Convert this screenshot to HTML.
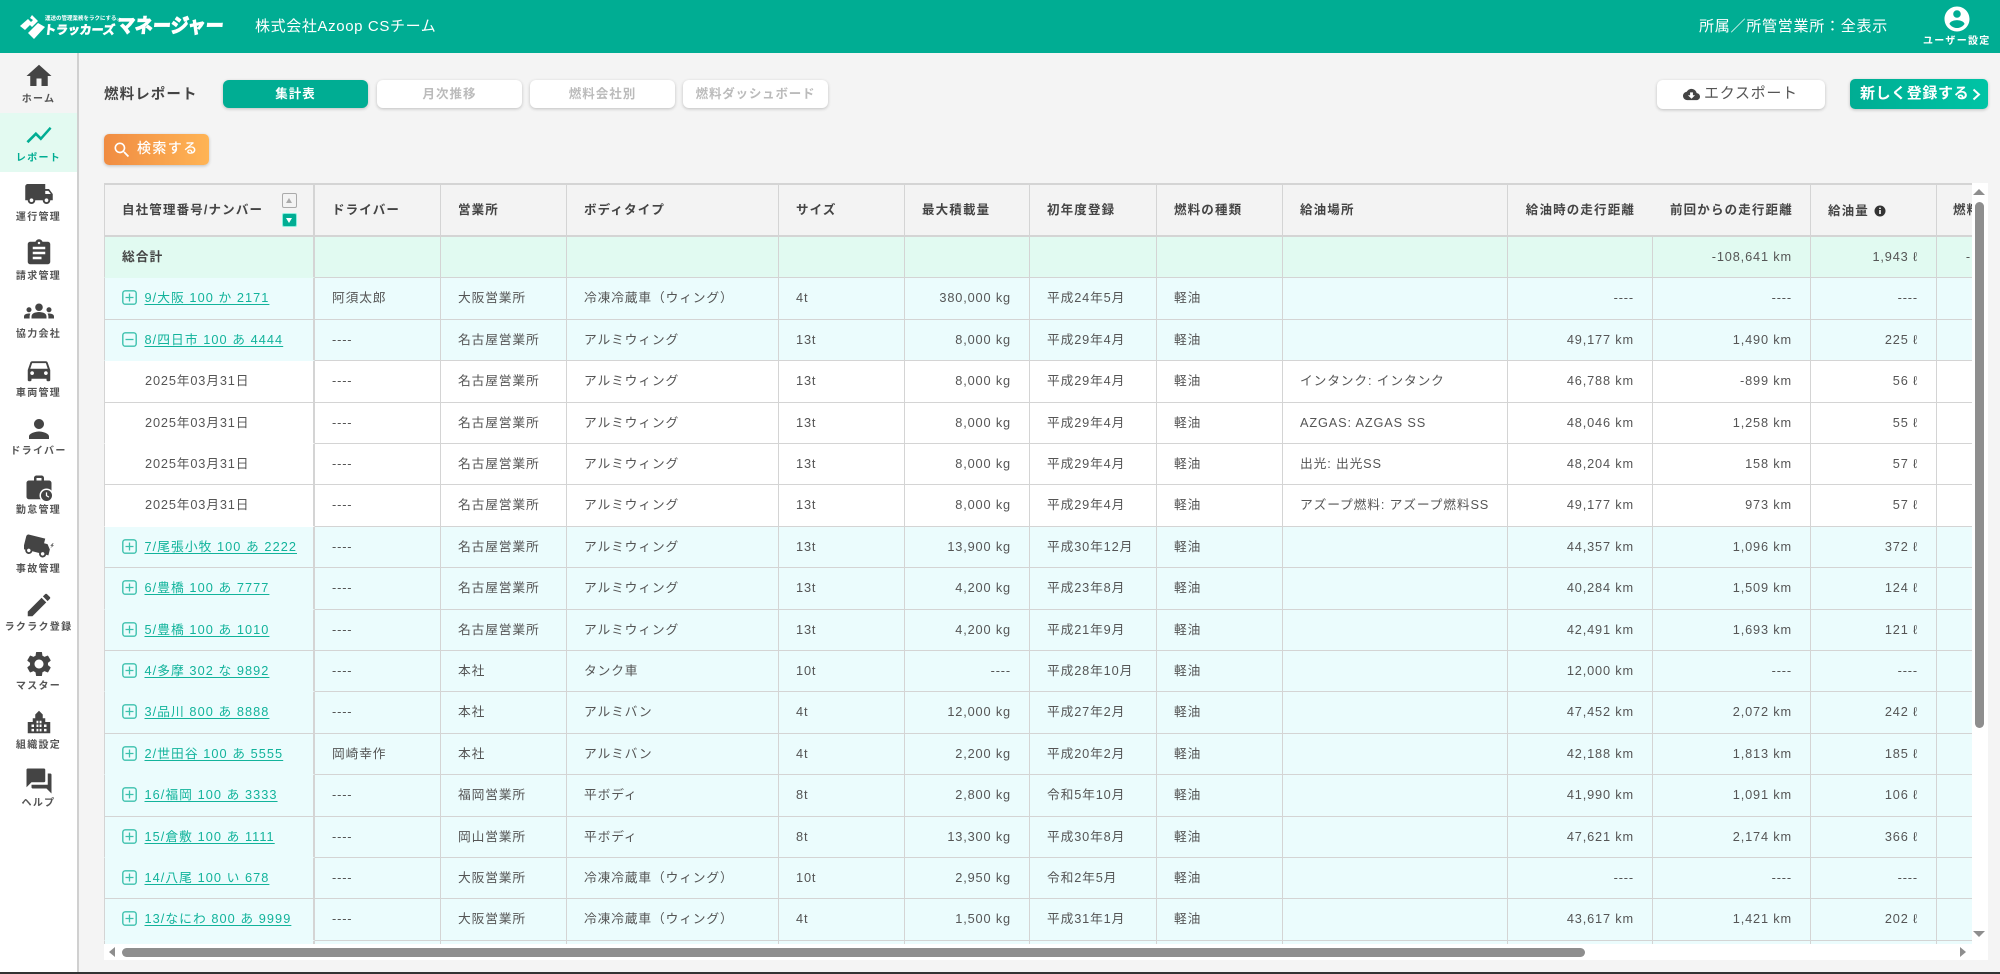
<!DOCTYPE html>
<html lang="ja"><head><meta charset="utf-8"><title>燃料レポート</title>
<style>
*{box-sizing:border-box;margin:0;padding:0}
html,body{width:2000px;height:974px;overflow:hidden;background:#f4f4f4}
body{font-family:"Liberation Sans","Noto Sans CJK JP",sans-serif;color:#555;position:relative;filter:blur(.3px)}
.abs{position:absolute}
#top{position:absolute;left:0;top:0;width:2000px;height:53px;background:#00ad93;color:#fff}
#side{position:absolute;left:0;top:53px;width:79px;height:919px;background:#fff;border-right:2px solid #d0d0d0}
.it{position:absolute;left:0;width:77px;height:59px;text-align:center}
.it svg{position:absolute;left:24px;width:30px;height:30px;fill:#444}
.it em{position:absolute;left:-5px;width:87px;top:38px;font-style:normal;font-weight:700;font-size:10px;line-height:14px;letter-spacing:1.3px;color:#555;white-space:nowrap}
.tab{position:absolute;top:80px;width:145px;height:28px;border-radius:6px;background:#fff;box-shadow:0 1px 3px rgba(0,0,0,.22);text-align:center;font-size:12.5px;font-weight:700;line-height:29px;color:#bbb;letter-spacing:1px}
#tbl{position:absolute;left:104px;top:183px;width:1868px;height:761px;overflow:hidden;background:#fff}
#rows{position:absolute;left:0;top:1px;width:2000px;height:800px}
.r{position:absolute;left:0;width:2000px;height:41.4px;display:grid;grid-template-columns:211px 126px 126px 212px 126px 125px 127px 126px 225px 145px 158px 126px 100px;font-size:12.75px;letter-spacing:.85px;background:#fff}
.r>span{display:block;line-height:40px;padding:0 18px 0 17px;border-right:1.5px solid #d4d4d4;border-bottom:1.5px solid #d4d4d4;white-space:nowrap;overflow:hidden}
.r>span:nth-child(1){padding-left:16.5px;border-left:1.5px solid #d4d4d4;border-right:2px solid #d4d4d4}
.r>span:nth-child(6),.r>span:nth-child(10),.r>span:nth-child(11),.r>span:nth-child(12){text-align:right}
.r.c>span{background:#ebfcfd}
.r.nb>span:nth-child(1){border-bottom-color:transparent}
.r.d>span:nth-child(1){padding-left:40px}
.r>span a{color:#12b39b;text-decoration:underline;text-underline-offset:2px;letter-spacing:1.05px}
.r>span svg{width:15px;height:15px;vertical-align:-3px;margin-right:8px}
#hd{position:absolute;left:0;top:0;width:2000px;height:54px;display:grid;grid-template-columns:211px 126px 126px 212px 126px 125px 127px 126px 225px 145px 158px 126px 100px;background:#f3f3f3;font-size:12.5px;font-weight:700;letter-spacing:1.15px;color:#444;border-top:2px solid #d4d4d4}
#hd>span{line-height:50px;padding:0 18px 0 17px;border-right:1.5px solid #d4d4d4;border-bottom:2px solid #d4d4d4;white-space:nowrap;overflow:hidden}
#hd>span:nth-child(1){padding-left:17px;border-left:1.5px solid #d4d4d4;border-right:2px solid #d4d4d4}
#hd>span:nth-child(10){text-align:right;border-right:none}
#hd>span:nth-child(11){text-align:right}
.r.t>span{background:#e1faf1;line-height:39px}
</style></head><body>

<div id="top">
<svg class="abs" style="left:19px;top:14px" width="27" height="26" viewBox="0 0 27 26" fill="#fff"><polygon points="13,1 19,7 13,13 10,10 14,6 11,4"/><polygon points="9,5 13,9 6,16 1,12"/><polygon points="19,9 26,13 15,25 9,19"/></svg>
<div class="abs" style="left:45px;top:15px;font-size:5.5px;font-weight:700;line-height:8px;white-space:nowrap">運送の管理業務をラクにする。</div>
<div class="abs" style="left:44px;top:21px;font-size:12px;font-weight:700;line-height:18px;white-space:nowrap;-webkit-text-stroke:.7px #fff;letter-spacing:-.1px;transform:skewX(-6deg)">トラッカーズ</div>
<div class="abs" style="left:117px;top:14px;font-size:18px;font-weight:700;line-height:24px;white-space:nowrap;-webkit-text-stroke:1px #fff;transform:skewX(-6deg) scaleY(1.1)">マネージャー</div>
<div class="abs" style="left:255px;top:17px;font-size:15px;line-height:20px;letter-spacing:.62px;white-space:nowrap">株式会社Azoop CSチーム</div>
<div class="abs" style="left:1699px;top:17px;font-size:15px;line-height:20px;letter-spacing:.75px;white-space:nowrap">所属／所管営業所：全表示</div>
<svg class="abs" style="left:1942px;top:4px" width="30" height="30" viewBox="0 0 24 24" fill="#fff"><path d="M12 2C6.48 2 2 6.48 2 12s4.48 10 10 10 10-4.48 10-10S17.52 2 12 2zm0 3c1.66 0 3 1.34 3 3s-1.34 3-3 3-3-1.34-3-3 1.34-3 3-3zm0 14.2c-2.5 0-4.71-1.28-6-3.22.03-1.99 4-3.08 6-3.08 1.99 0 5.97 1.09 6 3.08-1.29 1.94-3.5 3.22-6 3.22z"/></svg>
<div class="abs" style="left:1923px;top:35px;font-size:10px;font-weight:700;line-height:14px;letter-spacing:1.3px;white-space:nowrap">ユーザー設定</div>
</div>

<div id="side">
<div class="it" style="top:0;height:60px;background:#f4f4f4"><svg style="top:8px" viewBox="0 0 24 24"><path d="M10 20v-6h4v6h5v-8h3L12 3 2 12h3v8z"/></svg><em style="top:40px">ホーム</em></div>
<div class="it" style="top:60px;background:#e3faf1"><svg style="top:7px;fill:#00ad93" viewBox="0 0 24 24"><path d="M3.5 18.49l6-6.01 4 4L22 6.92l-1.41-1.41-7.09 7.97-4-4L2 16.99z"/></svg><em style="color:#00ad93;top:39px">レポート</em></div>
<div class="it" style="top:118px"><svg style="top:8px" viewBox="0 0 24 24"><path d="M20 8h-3V4H3c-1.1 0-2 .9-2 2v11h2c0 1.66 1.34 3 3 3s3-1.34 3-3h6c0 1.66 1.34 3 3 3s3-1.34 3-3h2v-5l-3-4zM6 18.5c-.83 0-1.5-.67-1.5-1.5s.67-1.5 1.5-1.5 1.5.67 1.5 1.5-.67 1.5-1.5 1.5zm13.5-9l1.96 2.5H17V9.5h2.5zm-1.5 9c-.83 0-1.5-.67-1.5-1.5s.67-1.5 1.5-1.5 1.5.67 1.5 1.5-.67 1.5-1.5 1.5z"/></svg><em style="top:40px">運行管理</em></div>
<div class="it" style="top:176px"><svg style="top:9px" viewBox="0 0 24 24"><path d="M19 3h-4.18C14.4 1.84 13.3 1 12 1c-1.3 0-2.4.84-2.82 2H5c-1.1 0-2 .9-2 2v14c0 1.1.9 2 2 2h14c1.1 0 2-.9 2-2V5c0-1.1-.9-2-2-2zm-7 0c.55 0 1 .45 1 1s-.45 1-1 1-1-.45-1-1 .45-1 1-1zm2 14H7v-2h7v2zm3-4H7v-2h10v2zm0-4H7V7h10v2z"/></svg><em style="top:41px">請求管理</em></div>
<div class="it" style="top:235px"><svg style="top:8px" viewBox="0 0 24 24"><path d="M12 12.75c1.63 0 3.07.39 4.24.9 1.08.48 1.76 1.56 1.76 2.73V18H6v-1.61c0-1.18.68-2.26 1.76-2.73 1.17-.52 2.61-.91 4.24-.91zM4 13c1.1 0 2-.9 2-2s-.9-2-2-2-2 .9-2 2 .9 2 2 2zm1.13 1.1C4.76 14.04 4.39 14 4 14c-.99 0-1.93.21-2.78.58C.48 14.9 0 15.62 0 16.43V18h4.5v-1.61c0-.83.23-1.61.63-2.29zM20 13c1.1 0 2-.9 2-2s-.9-2-2-2-2 .9-2 2 .9 2 2 2zm4 3.43c0-.81-.48-1.53-1.22-1.85C21.93 14.21 20.99 14 20 14c-.39 0-.76.04-1.13.1.4.68.63 1.46.63 2.29V18H24v-1.57zM12 6c1.66 0 3 1.34 3 3s-1.34 3-3 3-3-1.34-3-3 1.34-3 3-3z"/></svg><em style="top:40px">協力会社</em></div>
<div class="it" style="top:294px"><svg style="top:8px" viewBox="0 0 24 24"><path d="M18.92 6.01C18.72 5.42 18.16 5 17.5 5h-11c-.66 0-1.21.42-1.42 1.01L3 12v8c0 .55.45 1 1 1h1c.55 0 1-.45 1-1v-1h12v1c0 .55.45 1 1 1h1c.55 0 1-.45 1-1v-8l-2.08-5.99zM6.5 16c-.83 0-1.5-.67-1.5-1.5S5.67 13 6.5 13s1.5.67 1.5 1.5S7.33 16 6.5 16zm11 0c-.83 0-1.5-.67-1.5-1.5s.67-1.5 1.5-1.5 1.5.67 1.5 1.5-.67 1.5-1.5 1.5zM5 11l1.5-4.5h11L19 11H5z"/></svg><em style="top:40px">車両管理</em></div>
<div class="it" style="top:352px"><svg style="top:9px" viewBox="0 0 24 24"><path d="M12 12c2.21 0 4-1.79 4-4s-1.79-4-4-4-4 1.79-4 4 1.79 4 4 4zm0 2c-2.67 0-8 1.34-8 4v2h16v-2c0-2.66-5.33-4-8-4z"/></svg><em style="top:40px">ドライバー</em></div>
<div class="it" style="top:411px"><svg style="top:9px" viewBox="0 0 24 24"><path d="M20 6h-4V4c0-1.1-.9-2-2-2h-4c-1.1 0-2 .9-2 2v2H4c-1.1 0-2 .9-2 2v11c0 1.1.9 2 2 2h16c1.1 0 2-.9 2-2V8c0-1.1-.9-2-2-2zm-6 0h-4V4h4v2z"/><circle cx="18" cy="18" r="5.6" fill="#fff"/><circle cx="18" cy="18" r="4.4"/><path d="M17.5 15.5h1v2.4l1.7 1-.5.8-2.2-1.3z" fill="#fff"/></svg><em style="top:40px">勤怠管理</em></div>
<div class="it" style="top:470px"><svg style="top:9px" viewBox="0 0 24 24"><g transform="rotate(14 10 12) translate(-1 0) scale(.95)"><path d="M20 8h-3V4H3c-1.1 0-2 .9-2 2v11h2c0 1.66 1.34 3 3 3s3-1.34 3-3h6c0 1.66 1.34 3 3 3s3-1.34 3-3h2v-5l-3-4zM6 18.5c-.83 0-1.5-.67-1.5-1.5s.67-1.5 1.5-1.5 1.5.67 1.5 1.5-.67 1.5-1.5 1.5zm12 0c-.83 0-1.5-.67-1.5-1.5s.67-1.5 1.5-1.5 1.5.67 1.5 1.5-.67 1.5-1.5 1.5z"/></g><path d="M23 9l-2 2h1.6l-1.6 2 3-2.4h-1.5l1.2-1.6z"/></svg><em style="top:40px">事故管理</em></div>
<div class="it" style="top:528px"><svg style="top:9px" viewBox="0 0 24 24"><path d="M3 17.25V21h3.75L17.81 9.94l-3.75-3.75L3 17.25zM20.71 7.04c.39-.39.39-1.02 0-1.41l-2.34-2.34c-.39-.39-1.02-.39-1.41 0l-1.83 1.83 3.75 3.75 1.83-1.83z"/></svg><em style="top:40px">ラクラク登録</em></div>
<div class="it" style="top:587px"><svg style="top:9px" viewBox="0 0 24 24"><path d="M19.14 12.94c.04-.3.06-.61.06-.94 0-.32-.02-.64-.07-.94l2.03-1.58c.18-.14.23-.41.12-.61l-1.92-3.32c-.12-.22-.37-.29-.59-.22l-2.39.96c-.5-.38-1.03-.7-1.62-.94l-.36-2.54c-.04-.24-.24-.41-.48-.41h-3.84c-.24 0-.43.17-.47.41l-.36 2.54c-.59.24-1.13.57-1.62.94l-2.39-.96c-.22-.08-.47 0-.59.22L2.74 8.87c-.12.21-.08.47.12.61l2.03 1.58c-.05.3-.09.63-.09.94s.02.64.07.94l-2.03 1.58c-.18.14-.23.41-.12.61l1.92 3.32c.12.22.37.29.59.22l2.39-.96c.5.38 1.03.7 1.62.94l.36 2.54c.05.24.24.41.48.41h3.84c.24 0 .44-.17.47-.41l.36-2.54c.59-.24 1.13-.56 1.62-.94l2.39.96c.22.08.47 0 .59-.22l1.92-3.32c.12-.22.07-.47-.12-.61l-2.01-1.58zM12 15.6c-1.98 0-3.6-1.62-3.6-3.6s1.62-3.6 3.6-3.6 3.6 1.62 3.6 3.6-1.62 3.6-3.6 3.6z"/></svg><em style="top:40px">マスター</em></div>
<div class="it" style="top:646px"><svg style="top:8px" viewBox="0 0 24 24"><path fill-rule="evenodd" d="M12 3l3 3v3h2v3h4v9H3v-9h4V9h2V6zM6 14v2h2v-2zM10 11v2h1.5v-2zM12.5 11v2H14v-2zM10 14v2h1.5v-2zM12.5 14v2H14v-2zM16 14v2h2v-2zM6 17.5v2h2v-2zM10 17.5v2h1.5v-2zM12.5 17.5v2H14v-2zM16 17.5v2h2v-2z"/></svg><em style="top:40px">組織設定</em></div>
<div class="it" style="top:704px"><svg style="top:9px" viewBox="0 0 24 24"><path d="M21 6h-2v9H6v2c0 .55.45 1 1 1h11l4 4V7c0-.55-.45-1-1-1zm-4 6V3c0-.55-.45-1-1-1H3c-.55 0-1 .45-1 1v14l4-4h10c.55 0 1-.45 1-1z"/></svg><em style="top:40px">ヘルプ</em></div>
</div>

<div class="abs" style="left:104px;top:85px;font-size:14.5px;font-weight:700;line-height:20px;letter-spacing:1.1px;color:#444;white-space:nowrap">燃料レポート</div>
<div class="tab" style="left:223px;background:#00ad93;color:#fff">集計表</div>
<div class="tab" style="left:377px">月次推移</div>
<div class="tab" style="left:530px">燃料会社別</div>
<div class="tab" style="left:683px;letter-spacing:.8px">燃料ダッシュボード</div>

<div class="abs" style="left:1657px;top:80px;width:168px;height:29px;border-radius:6px;background:#fff;box-shadow:0 1px 3px rgba(0,0,0,.22);font-size:15px;line-height:27px;letter-spacing:.7px;color:#555;padding-left:47px;white-space:nowrap">エクスポート
<svg class="abs" style="left:26px;top:6px" width="17" height="17" viewBox="0 0 24 24" fill="#444"><path d="M19.35 10.04C18.67 6.59 15.64 4 12 4 9.11 4 6.6 5.64 5.35 8.04 2.34 8.36 0 10.91 0 14c0 3.31 2.69 6 6 6h13c2.76 0 5-2.24 5-5 0-2.64-2.05-4.78-4.65-4.96zM17 13l-5 5-5-5h3V9h4v4h3z"/></svg></div>
<div class="abs" style="left:1850px;top:79px;width:138px;height:30px;border-radius:5px;background:linear-gradient(90deg,#00ad93,#00c4a5);box-shadow:0 1px 3px rgba(0,0,0,.22);font-size:15px;font-weight:700;line-height:29px;letter-spacing:.6px;color:#fff;padding-left:10px;white-space:nowrap">新しく登録する
<svg class="abs" style="left:122px;top:9px" width="9" height="13" viewBox="0 0 9 13" fill="none" stroke="#fff" stroke-width="2"><path d="M1.5 1.5l5.5 5-5.5 5"/></svg></div>
<div class="abs" style="left:104px;top:134px;width:105px;height:31px;border-radius:5px;background:linear-gradient(90deg,#f08c42,#ffb455);box-shadow:0 1px 3px rgba(0,0,0,.22);font-size:14px;line-height:29px;letter-spacing:1.4px;color:#fff;padding-left:33px;white-space:nowrap;font-weight:500">検索する
<svg class="abs" style="left:8px;top:6px" width="20" height="20" viewBox="0 0 24 24" fill="#fff"><path d="M15.5 14h-.79l-.28-.27C15.41 12.59 16 11.11 16 9.5 16 5.91 13.09 3 9.5 3S3 5.91 3 9.5 5.91 16 9.5 16c1.61 0 3.09-.59 4.23-1.57l.27.28v.79l5 4.99L20.49 19l-4.99-5zm-6 0C7.01 14 5 11.99 5 9.5S7.01 5 9.5 5 14 7.01 14 9.5 11.99 14 9.5 14z"/></svg></div>

<svg width="0" height="0" style="position:absolute"><defs>
<symbol id="p" viewBox="0 0 15 15"><rect x=".8" y=".8" width="13.4" height="13.4" rx="2.5" fill="none" stroke="#3cc1ad" stroke-width="1.4"/><path d="M3.5 7.5h8M7.5 3.5v8" stroke="#3cc1ad" stroke-width="1.3"/></symbol>
<symbol id="m" viewBox="0 0 15 15"><rect x=".8" y=".8" width="13.4" height="13.4" rx="2.5" fill="none" stroke="#3cc1ad" stroke-width="1.4"/><path d="M3.5 7.5h8" stroke="#3cc1ad" stroke-width="1.3"/></symbol>
</defs></svg>

<div class="abs" style="left:104px;top:183px;width:1884px;height:777px;background:#fff"></div>
<div id="tbl">
<div id="hd"><span>自社管理番号/ナンバー</span><span>ドライバー</span><span>営業所</span><span>ボディタイプ</span><span>サイズ</span><span>最大積載量</span><span>初年度登録</span><span>燃料の種類</span><span>給油場所</span><span>給油時の走行距離</span><span>前回からの走行距離</span><span><b style="position:relative;top:1px;font-weight:700">給油量</b><svg style="vertical-align:-3px;margin-left:5px" width="12" height="12" viewBox="0 0 12 12"><circle cx="6" cy="6" r="5.5" fill="#333"/><path d="M5.2 5h1.6v4H5.2zM5.2 2.6h1.6v1.4H5.2z" fill="#fff"/></svg></span><span style="padding-left:16px">燃料費</span></div>
<div class="abs" style="left:178px;top:10px;width:15px;height:15px;background:#f3f3f3;border:1.5px solid #aaa;border-radius:2px"><div class="abs" style="left:3px;top:3.5px;width:0;height:0;border:3.5px solid transparent;border-top:0;border-bottom:5px solid #aaa"></div></div>
<div class="abs" style="left:178px;top:30px;width:15px;height:14px;background:#00ad93;border:1.5px solid #8ed;border-radius:2px"><div class="abs" style="left:3px;top:3.5px;width:0;height:0;border:3.5px solid transparent;border-bottom:0;border-top:5px solid #fff"></div></div>

<div id="rows">
<div class="r t nb" style="top:53px"><span style="font-weight:700;color:#444;letter-spacing:1px;padding-left:17px">総合計</span><span></span><span></span><span></span><span></span><span></span><span></span><span></span><span></span><span></span><span style="text-align:right">-108,641 km</span><span>1,943 ℓ</span><span style="text-align:right;padding-right:65px;overflow:visible">-</span></div>

<div class="r c" style="top:94.4px"><span><svg><use href="#p"/></svg><a>9/大阪 100 か 2171</a></span><span>阿須太郎</span><span>大阪営業所</span><span>冷凍冷蔵車（ウィング）</span><span>4t</span><span>380,000 kg</span><span>平成24年5月</span><span>軽油</span><span></span><span>----</span><span>----</span><span>----</span><span></span></div>
<div class="r c nb" style="top:135.8px"><span><svg><use href="#m"/></svg><a>8/四日市 100 あ 4444</a></span><span>----</span><span>名古屋営業所</span><span>アルミウィング</span><span>13t</span><span>8,000 kg</span><span>平成29年4月</span><span>軽油</span><span></span><span>49,177 km</span><span>1,490 km</span><span>225 ℓ</span><span></span></div>
<div class="r d" style="top:177.2px"><span>2025年03月31日</span><span>----</span><span>名古屋営業所</span><span>アルミウィング</span><span>13t</span><span>8,000 kg</span><span>平成29年4月</span><span>軽油</span><span>インタンク: インタンク</span><span>46,788 km</span><span>-899 km</span><span>56 ℓ</span><span></span></div>
<div class="r d nb" style="top:218.6px"><span>2025年03月31日</span><span>----</span><span>名古屋営業所</span><span>アルミウィング</span><span>13t</span><span>8,000 kg</span><span>平成29年4月</span><span>軽油</span><span>AZGAS: AZGAS SS</span><span>48,046 km</span><span>1,258 km</span><span>55 ℓ</span><span></span></div>
<div class="r d" style="top:260px"><span>2025年03月31日</span><span>----</span><span>名古屋営業所</span><span>アルミウィング</span><span>13t</span><span>8,000 kg</span><span>平成29年4月</span><span>軽油</span><span>出光: 出光SS</span><span>48,204 km</span><span>158 km</span><span>57 ℓ</span><span></span></div>
<div class="r d nb" style="top:301.4px"><span>2025年03月31日</span><span>----</span><span>名古屋営業所</span><span>アルミウィング</span><span>13t</span><span>8,000 kg</span><span>平成29年4月</span><span>軽油</span><span>アズープ燃料: アズープ燃料SS</span><span>49,177 km</span><span>973 km</span><span>57 ℓ</span><span></span></div>
<div class="r c" style="top:342.8px"><span><svg><use href="#p"/></svg><a>7/尾張小牧 100 あ 2222</a></span><span>----</span><span>名古屋営業所</span><span>アルミウィング</span><span>13t</span><span>13,900 kg</span><span>平成30年12月</span><span>軽油</span><span></span><span>44,357 km</span><span>1,096 km</span><span>372 ℓ</span><span></span></div>
<div class="r c nb" style="top:384.2px"><span><svg><use href="#p"/></svg><a>6/豊橋 100 あ 7777</a></span><span>----</span><span>名古屋営業所</span><span>アルミウィング</span><span>13t</span><span>4,200 kg</span><span>平成23年8月</span><span>軽油</span><span></span><span>40,284 km</span><span>1,509 km</span><span>124 ℓ</span><span></span></div>
<div class="r c" style="top:425.6px"><span><svg><use href="#p"/></svg><a>5/豊橋 100 あ 1010</a></span><span>----</span><span>名古屋営業所</span><span>アルミウィング</span><span>13t</span><span>4,200 kg</span><span>平成21年9月</span><span>軽油</span><span></span><span>42,491 km</span><span>1,693 km</span><span>121 ℓ</span><span></span></div>
<div class="r c nb" style="top:467px"><span><svg><use href="#p"/></svg><a>4/多摩 302 な 9892</a></span><span>----</span><span>本社</span><span>タンク車</span><span>10t</span><span>----</span><span>平成28年10月</span><span>軽油</span><span></span><span>12,000 km</span><span>----</span><span>----</span><span></span></div>
<div class="r c" style="top:508.4px"><span><svg><use href="#p"/></svg><a>3/品川 800 あ 8888</a></span><span>----</span><span>本社</span><span>アルミバン</span><span>4t</span><span>12,000 kg</span><span>平成27年2月</span><span>軽油</span><span></span><span>47,452 km</span><span>2,072 km</span><span>242 ℓ</span><span></span></div>
<div class="r c nb" style="top:549.8px"><span><svg><use href="#p"/></svg><a>2/世田谷 100 あ 5555</a></span><span>岡崎幸作</span><span>本社</span><span>アルミバン</span><span>4t</span><span>2,200 kg</span><span>平成20年2月</span><span>軽油</span><span></span><span>42,188 km</span><span>1,813 km</span><span>185 ℓ</span><span></span></div>
<div class="r c" style="top:591.2px"><span><svg><use href="#p"/></svg><a>16/福岡 100 あ 3333</a></span><span>----</span><span>福岡営業所</span><span>平ボディ</span><span>8t</span><span>2,800 kg</span><span>令和5年10月</span><span>軽油</span><span></span><span>41,990 km</span><span>1,091 km</span><span>106 ℓ</span><span></span></div>
<div class="r c nb" style="top:632.6px"><span><svg><use href="#p"/></svg><a>15/倉敷 100 あ 1111</a></span><span>----</span><span>岡山営業所</span><span>平ボディ</span><span>8t</span><span>13,300 kg</span><span>平成30年8月</span><span>軽油</span><span></span><span>47,621 km</span><span>2,174 km</span><span>366 ℓ</span><span></span></div>
<div class="r c" style="top:674px"><span><svg><use href="#p"/></svg><a>14/八尾 100 い 678</a></span><span>----</span><span>大阪営業所</span><span>冷凍冷蔵車（ウィング）</span><span>10t</span><span>2,950 kg</span><span>令和2年5月</span><span>軽油</span><span></span><span>----</span><span>----</span><span>----</span><span></span></div>
<div class="r c nb" style="top:715.4px"><span><svg><use href="#p"/></svg><a>13/なにわ 800 あ 9999</a></span><span>----</span><span>大阪営業所</span><span>冷凍冷蔵車（ウィング）</span><span>4t</span><span>1,500 kg</span><span>平成31年1月</span><span>軽油</span><span></span><span>43,617 km</span><span>1,421 km</span><span>202 ℓ</span><span></span></div>
<div class="r c" style="top:756.8px"><span></span><span></span><span></span><span></span><span></span><span></span><span></span><span></span><span></span><span></span><span></span><span></span><span></span></div>
</div>
</div>

<div class="abs" style="left:1975px;top:202px;width:9px;height:526px;background:#8e8e8e;border-radius:5px"></div>
<div class="abs" style="left:1973px;top:189px;width:0;height:0;border:6px solid transparent;border-top:0;border-bottom:6px solid #8e8e8e"></div>
<div class="abs" style="left:1973px;top:931px;width:0;height:0;border:6px solid transparent;border-bottom:0;border-top:6px solid #8e8e8e"></div>
<div class="abs" style="left:122px;top:948px;width:1463px;height:9px;background:#8e8e8e;border-radius:5px"></div>
<div class="abs" style="left:109px;top:947px;width:0;height:0;border:5px solid transparent;border-left:0;border-right:6px solid #8e8e8e"></div>
<div class="abs" style="left:1960px;top:947px;width:0;height:0;border:5px solid transparent;border-right:0;border-left:6px solid #8e8e8e"></div>

<div class="abs" style="left:0;top:972px;width:2000px;height:2px;background:#333"></div>
</body></html>
